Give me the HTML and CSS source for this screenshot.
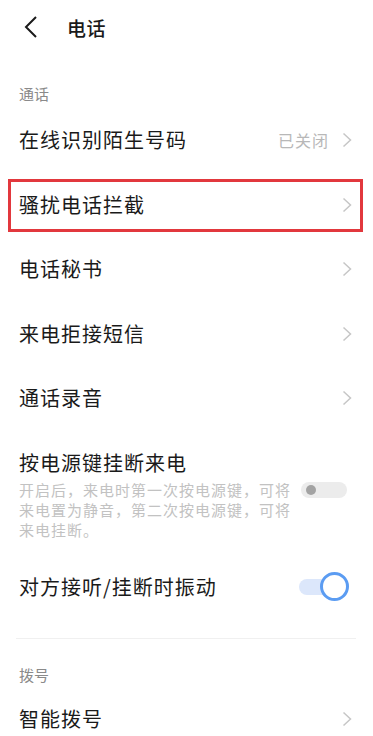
FILE: index.html
```html
<!DOCTYPE html>
<html>
  <head>
    <meta charset="utf-8">
    <link rel="stylesheet" href="styles.css">
  </head>
  <body>
    <header class="topbar">
      <svg class="back" width="16" height="22" viewBox="0 0 16 22">
        <path d="M13 1 L3 11 L13 21" fill="none" stroke="#1a1a1a" stroke-width="2"/>
      </svg>
      <h1>电话</h1>
    </header>

    <p class="group-label">通话</p>

    <div class="row">
      <span class="row-title">在线识别陌生号码</span>
      <span class="row-end">
        <span class="row-value">已关闭</span>
        <svg class="chevron" width="10" height="16" viewBox="0 0 10 16"><path d="M1.5 1.5 L8.5 8 L1.5 14.5" fill="none" stroke="#c6c6c6" stroke-width="1.5"/></svg>
      </span>
    </div>

    <div class="row row--marked">
      <span class="row-title">骚扰电话拦截</span>
      <svg class="chevron" width="10" height="16" viewBox="0 0 10 16"><path d="M1.5 1.5 L8.5 8 L1.5 14.5" fill="none" stroke="#c6c6c6" stroke-width="1.5"/></svg>
    </div>

    <div class="row">
      <span class="row-title">电话秘书</span>
      <svg class="chevron" width="10" height="16" viewBox="0 0 10 16"><path d="M1.5 1.5 L8.5 8 L1.5 14.5" fill="none" stroke="#c6c6c6" stroke-width="1.5"/></svg>
    </div>

    <div class="row">
      <span class="row-title">来电拒接短信</span>
      <svg class="chevron" width="10" height="16" viewBox="0 0 10 16"><path d="M1.5 1.5 L8.5 8 L1.5 14.5" fill="none" stroke="#c6c6c6" stroke-width="1.5"/></svg>
    </div>

    <div class="row">
      <span class="row-title">通话录音</span>
      <svg class="chevron" width="10" height="16" viewBox="0 0 10 16"><path d="M1.5 1.5 L8.5 8 L1.5 14.5" fill="none" stroke="#c6c6c6" stroke-width="1.5"/></svg>
    </div>

    <div class="row-tall">
      <span class="row-title">按电源键挂断来电</span>
      <div class="tall-body">
        <p class="row-desc">开启后，来电时第一次按电源键，可将来电置为静音，第二次按电源键，可将来电挂断。</p>
        <span class="switch switch--off"><span class="knob"></span></span>
      </div>
    </div>

    <div class="row">
      <span class="row-title">对方接听/挂断时振动</span>
      <span class="switch switch--on"><span class="knob"></span></span>
    </div>

    <hr class="divider">

    <p class="group-label group-label--second">拨号</p>

    <div class="row">
      <span class="row-title">智能拨号</span>
      <svg class="chevron" width="10" height="16" viewBox="0 0 10 16"><path d="M1.5 1.5 L8.5 8 L1.5 14.5" fill="none" stroke="#c6c6c6" stroke-width="1.5"/></svg>
    </div>
  </body>
</html>
```

FILE: styles.css
```css
body {
  margin: 0;
  background: #fff;
  color: #1a1a1a;
  font-family: "Noto Sans CJK SC", "Noto Sans", sans-serif;
  overflow: hidden;
}

.topbar {
  height: 54px;
  display: flex;
  align-items: center;
  padding-left: 23px;
}
.back { display: block; }
.topbar h1 {
  margin: 0 0 0 28px;
  font-size: 19px;
  font-weight: 500;
  letter-spacing: 0.5px;
}

.group-label {
  margin: 0;
  padding: 30px 0 4px 19px;
  font-size: 15px;
  line-height: 20px;
  color: #8a8a8a;
}
.group-label--second {
  padding-top: 26px;
  padding-bottom: 2px;
}

.row {
  height: 64.5px;
  display: flex;
  align-items: center;
  justify-content: space-between;
  padding: 0 21px 0 19px;
}
.row-title {
  font-size: 20px;
  letter-spacing: 1px;
  line-height: 28px;
}
.row-end {
  display: flex;
  align-items: center;
  gap: 13px;
}
.row-value {
  font-size: 16px;
  letter-spacing: 1px;
  color: #b8b8b8;
}
.chevron { display: block; }

.row--marked { position: relative; }
.row--marked::after {
  content: "";
  position: absolute;
  left: 8px;
  right: 10px;
  top: 6px;
  bottom: 5px;
  border: 3px solid #e2383d;
}

.row-tall {
  padding: 18px 21px 15px 19px;
}
.row-tall .row-title { display: block; }
.tall-body {
  display: flex;
  align-items: flex-start;
  justify-content: space-between;
  margin-top: 3px;
}
.row-desc {
  margin: 0;
  width: 275px;
  font-size: 15px;
  line-height: 20px;
  letter-spacing: 1px;
  color: #c2c2c2;
}

.switch {
  position: relative;
  display: block;
  width: 46px;
  height: 16px;
  border-radius: 8px;
}
.switch--off {
  margin-top: 2px;
  margin-right: 5px;
  background: #ececec;
}
.switch--off .knob {
  position: absolute;
  left: 5px;
  top: 3px;
  width: 10px;
  height: 10px;
  border-radius: 50%;
  background: #a3a3a3;
}
.switch--on {
  background: #dce7fb;
  margin-right: 7px;
}
.switch--on .knob {
  position: absolute;
  right: -4px;
  top: -7px;
  width: 23px;
  height: 23px;
  border-radius: 50%;
  background: #fff;
  border: 3px solid #5b9cf2;
}

.divider {
  margin: 19px 17px 0 16px;
  border: 0;
  border-top: 1px solid #f0f0f0;
}
```
